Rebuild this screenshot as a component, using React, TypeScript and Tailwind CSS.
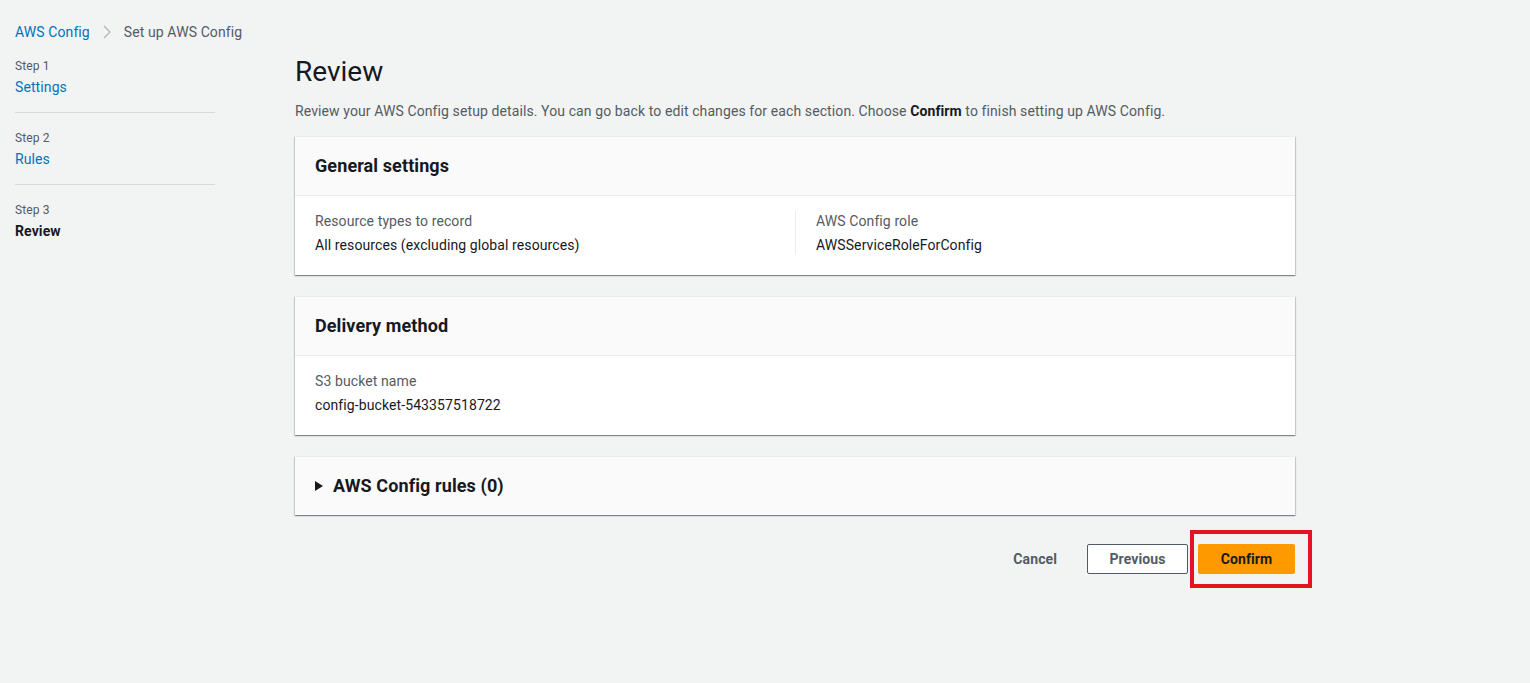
import React from 'react';

const steps = [
  { step: 'Step 1', label: 'Settings', current: false },
  { step: 'Step 2', label: 'Rules', current: false },
  { step: 'Step 3', label: 'Review', current: true },
];

const cardShadow =
  'shadow-[0_1px_1px_0_rgba(0,28,36,0.3),1px_1px_1px_0_rgba(0,28,36,0.15),-1px_1px_1px_0_rgba(0,28,36,0.15)]';

const Card: React.FC<{ title: React.ReactNode; children?: React.ReactNode }> = ({ title, children }) => (
  <div className={`bg-white border-t border-[#eaeded] ${cardShadow}`}>
    <div className={`bg-[#fafafa] px-5 py-[18px] ${children ? 'border-b border-[#eaeded]' : ''}`}>
      <h2 className="text-[18px] leading-[22px] font-bold text-[#16191f]">{title}</h2>
    </div>
    {children && <div className="px-5 pt-[15px] pb-5">{children}</div>}
  </div>
);

const Field: React.FC<{ label: string; value: string }> = ({ label, value }) => (
  <div>
    <div className="text-sm leading-5 text-[#545b64]">{label}</div>
    <div className="mt-1 text-sm leading-5 text-[#16191f]">{value}</div>
  </div>
);

export default function App() {
  return (
    <div className="min-h-screen bg-[#f2f3f3] font-['Roboto',sans-serif] tracking-[0.1px] text-[#16191f]">
      {/* breadcrumbs */}
      <div className="flex items-center pl-[15px] pt-[22px] text-sm leading-5">
        <span className="text-[#0073bb]">AWS Config</span>
        <svg className="mx-[12px] h-[14px] w-[10px]" viewBox="0 0 10 14" fill="none">
          <polyline points="2,1 8,7 2,13" stroke="#aab7b8" strokeWidth="1.3" />
        </svg>
        <span className="text-[#545b64]">Set up AWS Config</span>
      </div>

      <div className="flex">
        {/* wizard steps */}
        <nav className="ml-[15px] mt-[16px] w-[200px] shrink-0">
          {steps.map((s, i) => (
            <div
              key={s.step}
              className={`${i === 0 ? '' : 'pt-[17px]'} ${
                i < steps.length - 1 ? 'pb-[15px] border-b border-[#d5dbdb]' : ''
              }`}
            >
              <div className="text-xs leading-4 text-[#545b64]">{s.step}</div>
              <div
                className={`mt-[3px] text-sm leading-5 ${
                  s.current ? 'font-bold text-[#16191f]' : 'text-[#0073bb]'
                }`}
              >
                {s.label}
              </div>
            </div>
          ))}
        </nav>

        {/* main */}
        <main className="ml-[80px] mt-[12px] w-[1000px]">
          <h1 className="text-[28px] leading-9 font-normal tracking-normal text-[#16191f]">Review</h1>
          <p className="mt-[11px] text-sm leading-5 text-[#545b64]">
            Review your AWS Config setup details. You can go back to edit changes for each section. Choose{' '}
            <b className="text-[#16191f]">Confirm</b> to finish setting up AWS Config.
          </p>

          <div className="mt-[15px] flex flex-col gap-[21px]">
            <Card title="General settings">
              <div className="grid grid-cols-2">
                <Field label="Resource types to record" value="All resources (excluding global resources)" />
                <div className="border-l border-[#eaeded] pl-5">
                  <Field label="AWS Config role" value="AWSServiceRoleForConfig" />
                </div>
              </div>
            </Card>

            <Card title="Delivery method">
              <Field label="S3 bucket name" value="config-bucket-543357518722" />
            </Card>

            <Card
              title={
                <span className="flex items-center">
                  <svg className="mr-[10px] h-[10px] w-[8px]" viewBox="0 0 8 10">
                    <polygon points="0,0 8,5 0,10" fill="#16191f" />
                  </svg>
                  AWS Config rules (0)
                </span>
              }
            />
          </div>

          <div className="mt-[29px] flex items-center justify-end">
            <button className="h-[30px] px-5 text-sm font-bold text-[#545b64]">Cancel</button>
            <button className="ml-[10px] h-[30px] w-[101px] border border-[#545b64] bg-white rounded-[2px] text-sm font-bold text-[#545b64]">
              Previous
            </button>
            <div className="relative ml-[10px]">
              <button className="h-[30px] w-[97px] rounded-[2px] bg-[#ff9900] text-sm font-bold text-[#16191f]">
                Confirm
              </button>
              <div className="pointer-events-none absolute -left-[8px] -right-[17px] -top-[14px] -bottom-[14px] border-4 border-[#e3141f]" />
            </div>
          </div>
        </main>
      </div>
    </div>
  );
}
